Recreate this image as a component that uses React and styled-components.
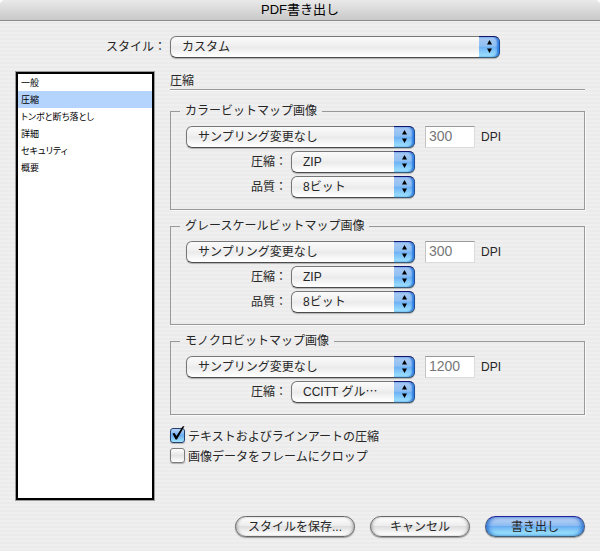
import React, {useState} from 'react';
import styled, {createGlobalStyle, css} from 'styled-components';


const GlobalStyle = createGlobalStyle`
    * {
        box-sizing: border-box;
    }
    body {
        margin: 0;
        background: #fff;
    }
    body, button, input, select {
        font-family: "Liberation Sans", "Noto Sans CJK JP", sans-serif;
        font-size: 12px;
        color: #262626;
    }
`;

const Window = styled.div`
    min-height: 100vh;
    border-radius: 5px 5px 0 0;
    overflow: hidden;
    background: repeating-linear-gradient(to bottom, #efefef 0 2px, #ebebeb 2px 4px);
`;

const TitleBar = styled.header`
    height: 21px;
    border-bottom: 1px solid #8c8c8c;
    background: linear-gradient(to bottom, #e9e9e9, #c9c9c9);
`;

const Title = styled.h1`
    margin: 0;
    font-size: 13px;
    font-weight: normal;
    line-height: 19px;
    text-align: center;
    color: #000;
`;

const Content = styled.form`
    padding: 15px;
`;

const StyleRow = styled.div`
    display: grid;
    grid-template-columns: 151px 1fr;
    column-gap: 4px;
    align-items: center;
`;

const Label = styled.label`
    line-height: 20px;
    text-align: right;
    white-space: nowrap;
`;

const Columns = styled.div`
    display: grid;
    grid-template-columns: 140px 1fr;
    column-gap: 15px;
    margin-top: 13px;
`;

const Categories = styled.nav`
    min-height: 430px;
    padding: 2px;
    border: 1px solid #9a9a9a;
    background: #fff;
    box-shadow: inset 0 0 0 2px #000;
`;

const Category = styled.a`
    display: block;
    height: 17px;
    padding-left: 3px;
    font-family: "Noto Sans CJK JP", sans-serif;
    font-size: 9px;
    font-feature-settings: "palt";
    line-height: 17px;
    color: #000;
    text-decoration: none;
    ${props => props.$active && css`
        background: #b4d3fd;
    `}
`;

const Heading = styled.h2`
    height: 19px;
    margin: 0 0 12px;
    border-bottom: 1px solid #999;
    box-shadow: 0 1px 0 #fafafa;
    font-size: 12px;
    font-weight: normal;
    line-height: 20px;
`;

const Group = styled.fieldset`
    min-width: 0;
    margin: 0 0 7px;
    padding: 6px 15px 11px;
    border: 1px solid #999;
    box-shadow: 1px 1px 0 #fafafa;
`;

const Legend = styled.legend`
    margin-left: -6px;
    padding: 0 5px;
    line-height: 18px;
`;

const SamplingRow = styled.div`
    display: flex;
    align-items: center;
    height: 22px;
`;

const OptionRow = styled.div`
    display: grid;
    grid-template-columns: 101px 124px;
    column-gap: 4px;
    align-items: center;
    height: 22px;
    margin-top: 3px;
`;

const SelectBox = styled.div`
    position: relative;
    width: ${props => props.$width};
    max-width: 100%;
    height: 22px;
    border-radius: 6px;
    box-shadow: 0 1px 1px rgba(0, 0, 0, .25);
`;

const NativeSelect = styled.select`
    appearance: none;
    display: block;
    width: 100%;
    height: 22px;
    margin: 0;
    padding: 0 22px 0 11px;
    border: 1px solid #777;
    border-bottom-color: #4c4c4c;
    border-radius: 6px;
    background: linear-gradient(to bottom, #fbfbfb, #efefef 45%, #eaeaea 50%, #fff 95%);
    line-height: 20px;
`;

const Cap = styled.span`
    position: absolute;
    top: 0;
    right: 0;
    width: 21px;
    height: 22px;
    border: 1px solid #1c4f9c;
    border-top-color: #14146e;
    border-bottom-color: #3b5c78;
    border-left: 0;
    border-radius: 0 6px 6px 0;
    background: linear-gradient(to bottom, #a9c8f2, #8fc0f3 45%, #6fb2f5 52%, #a0e6ff);
    box-shadow: inset -2px 0 2px #2f7de0;
    pointer-events: none;
    svg {
        display: block;
        width: 20px;
        height: 20px;
    }
`;

const Dpi = styled.input`
    width: 50px;
    height: 22px;
    margin: 0 6px 0 10px;
    padding: 0 3px 2px;
    border: 1px solid #dcdcdc;
    border-top-color: #999;
    border-left-color: #c4c4c4;
    background: #fff;
    font-size: 14px;
    color: #777;
`;

const CheckLabel = styled.label`
    display: flex;
    align-items: center;
    gap: 3px;
    height: 20px;
`;

const CheckList = styled.div`
    margin-top: 10px;
`;

const CheckBox = styled.span`
    position: relative;
    width: 15px;
    height: 15px;
    svg {
        display: none;
        position: absolute;
        left: 0;
        bottom: 0;
        width: 16px;
        height: 18px;
        pointer-events: none;
    }
    input:checked + svg {
        display: block;
    }
`;

const CheckInput = styled.input`
    appearance: none;
    display: block;
    width: 15px;
    height: 15px;
    margin: 0;
    border: 1px solid #7c7c7c;
    border-radius: 3px;
    background: linear-gradient(to bottom, #fff, #e4e4e4 50%, #fff);
    box-shadow: 0 1px 1px rgba(0, 0, 0, .25);
    &:checked {
        border-color: #24406f;
        background: linear-gradient(to bottom, #b9d4f6, #6bacf0 50%, #a4e6ff);
    }
`;

const Buttons = styled.footer`
    display: flex;
    justify-content: flex-end;
    gap: 15px;
    margin-top: 15px;
`;

const Button = styled.button`
    min-width: 100px;
    height: 21px;
    padding: 0 12px;
    border: 1px solid #666;
    border-radius: 11px;
    background: linear-gradient(to bottom, #fff, #ededed 45%, #dedede 50%, #fff 95%);
    box-shadow: inset 2px 0 3px -1px #aaa, inset -2px 0 3px -1px #aaa, 0 1px 1px rgba(0, 0, 0, .35);
    line-height: 18px;
    ${props => props.$primary && css`
        border-color: #23239a #3c5580 #3f6078;
        background: linear-gradient(to bottom, #c4d6f5, #8cbcf2 45%, #6aaef2 50%, #a5f0ff 95%);
        box-shadow: inset 3px 0 4px -1px #2a6fd0, inset -3px 0 4px -1px #2a6fd0, 0 1px 1px rgba(0, 0, 0, .35);
    `}
`;

const categories = ['一般', '圧縮', 'トンボと断ち落とし', '詳細', 'セキュリティ', '概要'];

const groups = [
    {
        id: 'color',
        title: 'カラービットマップ画像',
        dpi: '300',
        options: [['圧縮：', 'ZIP'], ['品質：', '8ビット']],
    },
    {
        id: 'gray',
        title: 'グレースケールビットマップ画像',
        dpi: '300',
        options: [['圧縮：', 'ZIP'], ['品質：', '8ビット']],
    },
    {
        id: 'mono',
        title: 'モノクロビットマップ画像',
        dpi: '1200',
        options: [['圧縮：', 'CCITT グル⋯']],
    },
];

function Select({id, value, width = '100%', label}) {
    return (
        <SelectBox $width={width}>
            <NativeSelect id={id} aria-label={label}>
                <option>{value}</option>
            </NativeSelect>
            <Cap>
                <svg viewBox="0 0 20 20" aria-hidden="true">
                    <path d="M10.5 3 L13 7.5 H8 Z M8 11.5 H13 L10.5 16 Z" fill="#000"/>
                </svg>
            </Cap>
        </SelectBox>
    );
}

function BitmapGroup({group}) {
    return (
        <Group>
            <Legend>{group.title}</Legend>
            <SamplingRow>
                <Select value="サンプリング変更なし" width="229px" label={group.title}/>
                <Dpi id={group.id + '-dpi'} defaultValue={group.dpi}/>
                <Label htmlFor={group.id + '-dpi'}>DPI</Label>
            </SamplingRow>
            {group.options.map(([name, value], i) => (
                <OptionRow key={name}>
                    <Label htmlFor={group.id + i}>{name}</Label>
                    <Select id={group.id + i} value={value}/>
                </OptionRow>
            ))}
        </Group>
    );
}

function Check({text, initial}) {
    const [checked, setChecked] = useState(initial);
    return (
        <CheckLabel>
            <CheckBox>
                <CheckInput type="checkbox" checked={checked} onChange={e => setChecked(e.target.checked)}/>
                <svg viewBox="0 0 16 18" aria-hidden="true">
                    <path d="M2.5 8.5 L4.5 8 L6.5 11 L12.5 1.5 L14.5 1 L7 14.5 L5.5 14.5 Z" fill="#000"/>
                </svg>
            </CheckBox>
            {text}
        </CheckLabel>
    );
}

function App() {
    const [active, setActive] = useState('圧縮');
    return (
        <Window>
            <GlobalStyle/>
            <TitleBar>
                <Title>PDF書き出し</Title>
            </TitleBar>
            <Content onSubmit={e => e.preventDefault()}>
                <StyleRow>
                    <Label htmlFor="style">スタイル：</Label>
                    <Select id="style" value="カスタム" width="330px"/>
                </StyleRow>
                <Columns>
                    <Categories>
                        {categories.map(name => (
                            <Category key={name} href="#" $active={name === active} onClick={() => setActive(name)}>
                                {name}
                            </Category>
                        ))}
                    </Categories>
                    <main>
                        <Heading>{active}</Heading>
                        {groups.map(group => <BitmapGroup key={group.id} group={group}/>)}
                        <CheckList>
                            <Check text="テキストおよびラインアートの圧縮" initial={true}/>
                            <Check text="画像データをフレームにクロップ" initial={false}/>
                        </CheckList>
                    </main>
                </Columns>
                <Buttons>
                    <Button type="button">スタイルを保存...</Button>
                    <Button type="button">キャンセル</Button>
                    <Button type="submit" $primary>書き出し</Button>
                </Buttons>
            </Content>
        </Window>
    );
}

export default App;
